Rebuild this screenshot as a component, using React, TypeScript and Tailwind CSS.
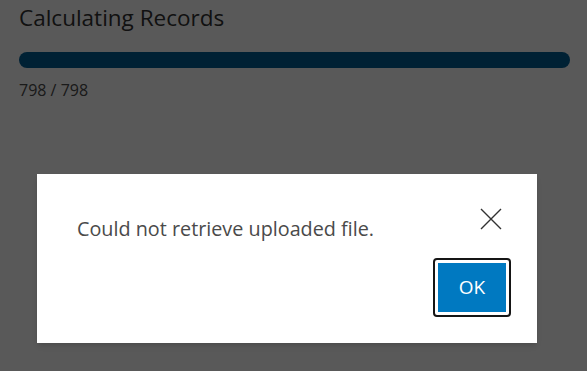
import React from 'react';

const App: React.FC = () => {
  return (
    <div className="relative h-[371px] w-[587px] overflow-hidden bg-white" style={{ fontFamily: '"Open Sans", sans-serif' }}>
      {/* page underneath */}
      <div className="px-[19px] pt-[2px]">
        <h1 className="text-[22.5px] leading-[32px] text-[#323232]">Calculating Records</h1>
        <div className="mt-[18px] h-[16px] w-[551px] rounded-full bg-[#005e95]" />
        <div className="mt-[12px] text-[16px] leading-[20px] text-[#4a4a4a]">798 / 798</div>
      </div>

      {/* overlay */}
      <div className="absolute inset-0 bg-black/65" />

      {/* dialog */}
      <div className="absolute left-[37px] top-[174px] flex h-[169px] w-[500px] flex-col bg-white shadow-md">
        <div className="flex items-start justify-between pl-[40px] pr-[34px] pt-[33px]">
          <p className="mt-[10px] text-[19.8px] leading-[24px] text-[#4a4a4a]">Could not retrieve uploaded file.</p>
          <button className="flex h-[24px] w-[24px] items-center justify-center text-[#323232]">
            <svg width="24" height="24" viewBox="0 0 24 24" fill="none" stroke="currentColor" strokeWidth="1.4">
              <path d="M2 2L22 22M22 2L2 22" />
            </svg>
          </button>
        </div>
        <div className="mt-auto flex justify-end pb-[26px] pr-[26px]">
          <div className="rounded-[4px] border-2 border-[#151515] p-[3px]">
            <button className="flex h-[49px] w-[68px] items-center justify-center bg-[#0079c1] text-[19px] text-white">OK</button>
          </div>
        </div>
      </div>
    </div>
  );
};

export default App;
